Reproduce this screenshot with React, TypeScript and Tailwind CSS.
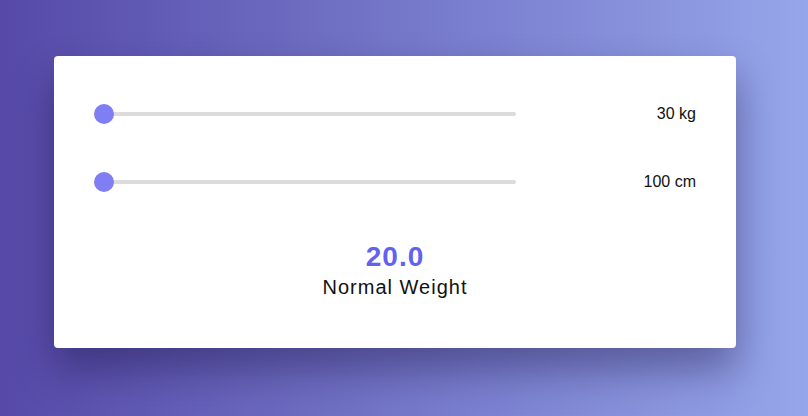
import { useState } from "react";

function Slider({ value, min, max, label }: { value: number; min: number; max: number; label: string }) {
    const pct = ((value - min) / (max - min)) * 100

    return (
        <div className="flex items-center justify-between h-5">
            <div className="relative w-[422px] h-5 flex items-center">
                <div className="w-full h-1 rounded-full bg-[#dddbdb]" />
                <div
                    className="absolute top-0 w-5 h-5 rounded-full bg-[#7f7ef2]"
                    style={{ left: `calc(${pct}% - ${pct * 0.2}px)` }}
                />
            </div>
            <span className="text-base text-[#111]">{label}</span>
        </div>
    )
}

export default function App() {

    const [weight] = useState(30)
    const [height] = useState(100)

    const bmi = weight / ((height / 100) * (height / 100))
    const result = (bmi / 1.5).toFixed(1)

    return (
        <div className="w-[808px] h-[416px] bg-linear-to-r from-[#5649a8] to-[#96a6ea] pl-[54px] pt-[56px] font-['Liberation_Sans',Arial,sans-serif]">

            <div className="w-[682px] bg-white rounded-[4px] px-10 pt-12 pb-[49px] shadow-[0_22px_40px_rgba(20,10,60,0.4)]">

                <div className="flex flex-col gap-12">
                    <Slider value={weight} min={30} max={200} label={`${weight} kg`} />
                    <Slider value={height} min={100} max={250} label={`${height} cm`} />
                </div>

                <div className="mt-[49px] flex flex-col items-center">
                    <p className="text-[28px] leading-8 font-bold tracking-[1px] text-[#6161f2]">{result}</p>
                    <p className="mt-[2px] text-[20px] leading-6 tracking-[1px] text-[#111]">Normal Weight</p>
                </div>

            </div>

        </div>
    )
}
